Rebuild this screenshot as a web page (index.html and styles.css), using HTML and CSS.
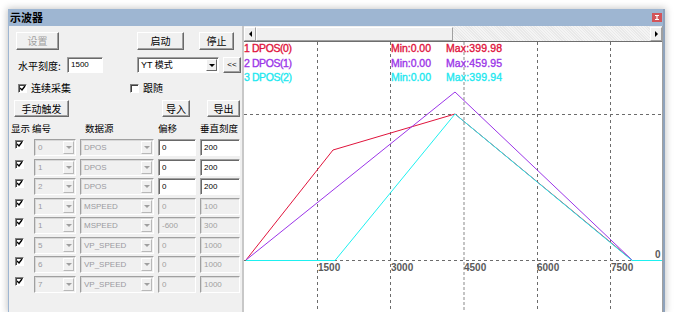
FILE: index.html
```html
<!DOCTYPE html>
<html lang="zh">
  <head>
    <meta charset="UTF-8" />
    <title>示波器</title>
    <link rel="stylesheet" href="styles.css">
  </head>
  <body>
    <div class="window">
      <div class="titlebar">
        <span class="title">示波器</span>
        <span class="close">
          <svg width="10" height="9" viewBox="0 0 10 9"><path d="M3 2.5h4M5 2.5v4M3 6.5h4" stroke="#fff" stroke-width="1.2" fill="none"/></svg>
        </span>
      </div>

      <div class="main">
        <div class="panel">
          <div class="row row-top">
            <button class="btn btn-set" disabled>设置</button>
            <button class="btn btn-start">启动</button>
            <button class="btn btn-stop">停止</button>
          </div>

          <div class="row row-scale">
            <span class="label">水平刻度:</span>
            <span class="field field-h">1500</span>
            <span class="combo combo-mode">YT 模式<span class="drop"><i></i></span></span>
            <button class="btn btn-back">&lt;&lt;</button>
          </div>

          <div class="row row-check">
            <span class="check-group"><span class="check on"></span>连续采集</span>
            <span class="check-group"><span class="check"></span>跟随</span>
          </div>

          <div class="row row-trigger">
            <button class="btn btn-trig">手动触发</button>
            <button class="btn btn-in">导入</button>
            <button class="btn btn-out">导出</button>
          </div>

          <div class="row table-head">
            <span class="col-show">显示</span>
            <span class="col-id">编号</span>
            <span class="col-src">数据源</span>
            <span class="col-off">偏移</span>
            <span class="col-scale">垂直刻度</span>
          </div>

          <div class="channels">
            <div class="channel">
              <span class="check on"></span>
              <span class="combo off combo-id">0<span class="drop"><i></i></span></span>
              <span class="combo off combo-src">DPOS<span class="drop"><i></i></span></span>
              <span class="field field-off">0</span>
              <span class="field field-scale">200</span>
            </div>
            <div class="channel">
              <span class="check on"></span>
              <span class="combo off combo-id">1<span class="drop"><i></i></span></span>
              <span class="combo off combo-src">DPOS<span class="drop"><i></i></span></span>
              <span class="field field-off">0</span>
              <span class="field field-scale">200</span>
            </div>
            <div class="channel">
              <span class="check on"></span>
              <span class="combo off combo-id">2<span class="drop"><i></i></span></span>
              <span class="combo off combo-src">DPOS<span class="drop"><i></i></span></span>
              <span class="field field-off">0</span>
              <span class="field field-scale">200</span>
            </div>
            <div class="channel">
              <span class="check on"></span>
              <span class="combo off combo-id">1<span class="drop"><i></i></span></span>
              <span class="combo off combo-src">MSPEED<span class="drop"><i></i></span></span>
              <span class="field off field-off">0</span>
              <span class="field off field-scale">100</span>
            </div>
            <div class="channel">
              <span class="check on"></span>
              <span class="combo off combo-id">1<span class="drop"><i></i></span></span>
              <span class="combo off combo-src">MSPEED<span class="drop"><i></i></span></span>
              <span class="field off field-off">-600</span>
              <span class="field off field-scale">300</span>
            </div>
            <div class="channel">
              <span class="check on"></span>
              <span class="combo off combo-id">5<span class="drop"><i></i></span></span>
              <span class="combo off combo-src">VP_SPEED<span class="drop"><i></i></span></span>
              <span class="field off field-off">0</span>
              <span class="field off field-scale">1000</span>
            </div>
            <div class="channel">
              <span class="check on"></span>
              <span class="combo off combo-id">6<span class="drop"><i></i></span></span>
              <span class="combo off combo-src">VP_SPEED<span class="drop"><i></i></span></span>
              <span class="field off field-off">0</span>
              <span class="field off field-scale">1000</span>
            </div>
            <div class="channel">
              <span class="check on"></span>
              <span class="combo off combo-id">7<span class="drop"><i></i></span></span>
              <span class="combo off combo-src">VP_SPEED<span class="drop"><i></i></span></span>
              <span class="field off field-off">0</span>
              <span class="field off field-scale">1000</span>
            </div>
          </div>
        </div>

        <div class="split"></div>

        <div class="chart">
          <div class="scrollbar">
            <span class="arrow arrow-left"></span>
            <span class="thumb"></span>
            <span class="track"></span>
            <span class="arrow arrow-right"></span>
          </div>
          <svg class="plot" width="418" height="270" viewBox="0 0 418 270">
            <!-- grid -->
            <g stroke="#6c6c6c" stroke-width="1" stroke-dasharray="3 3" fill="none">
              <path d="M73.5 0V270M146.5 0V270M293.5 0V270M366.5 0V270"/>
              <path d="M0 72.5H418M0 218.5H418"/>
            </g>
            <path d="M220 0V270" stroke="#c4c4c4" stroke-width="2" stroke-dasharray="3 2"/>

            <!-- traces -->
            <polyline points="2,218 89,108 211,72 388,218" fill="none" stroke="#e0143c" stroke-width="1"/>
            <polyline points="2,218 211,50 388,218" fill="none" stroke="#9b35e8" stroke-width="1"/>
            <polyline points="2,218.5 91,218.5 211,72 388,218.5 418,218.5" fill="none" stroke="#1ef0f0" stroke-width="1"/>

            <!-- legend -->
            <g class="legend">
              <g fill="#e0143c" stroke="#e0143c">
                <text x="0" y="10" textLength="48">1 DPOS(0)</text>
                <text x="147" y="10" textLength="40">Min:0.00</text>
                <text x="202" y="10" textLength="56">Max:399.98</text>
              </g>
              <g fill="#9b35e8" stroke="#9b35e8">
                <text x="0" y="25" textLength="48">2 DPOS(1)</text>
                <text x="147" y="25" textLength="40">Min:0.00</text>
                <text x="202" y="25" textLength="56">Max:459.95</text>
              </g>
              <g fill="#1ee8f0" stroke="#1ee8f0">
                <text x="0" y="39" textLength="48">3 DPOS(2)</text>
                <text x="147" y="39" textLength="40">Min:0.00</text>
                <text x="202" y="39" textLength="56">Max:399.94</text>
              </g>
            </g>

            <!-- axis labels -->
            <g class="ticks">
              <text x="74" y="229">1500</text>
              <text x="147" y="229">3000</text>
              <text x="220" y="229">4500</text>
              <text x="293" y="229">6000</text>
              <text x="367" y="229">7500</text>
              <text x="411" y="216">0</text>
            </g>
          </svg>
        </div>
      </div>
    </div>
  </body>
</html>
```

FILE: styles.css
```css
body {
  margin: 0;
  background: #fff;
  font-family: "Noto Sans CJK SC", "Liberation Sans", sans-serif;
  font-size: 10px;
  color: #000;
}
.window {
  margin: 9px 0 0 8px;
  width: 654px;
  border-left: 1px solid #9eb6d2;
  border-right: 2px solid #8fa3bc;
  box-shadow: 0 0 7px 1px rgba(0, 0, 0, 0.22);
}
.titlebar {
  height: 17px;
  background: #9eb6d2;
  display: flex;
  align-items: center;
  justify-content: space-between;
}
.title {
  margin-left: 1px;
  font-size: 11px;
  font-weight: bold;
  line-height: 17px;
}
.close {
  width: 10px;
  height: 9px;
  margin-right: 1px;
  background: #d2555a;
  display: flex;
}
.main {
  display: flex;
  height: 286px;
}

/* left control panel */
.panel {
  width: 233px;
  background: #f0f0f0;
}
.row {
  display: flex;
  align-items: center;
}
.btn {
  box-sizing: border-box;
  height: 18px;
  padding: 0;
  margin: 0;
  font-family: "Noto Sans CJK SC", sans-serif;
  font-size: 10px;
  line-height: 14px;
  color: #000;
  background: #f0f0f0;
  border: 1px solid;
  border-color: #fff #696969 #696969 #fff;
  box-shadow: inset -1px -1px #a0a0a0;
}
.btn:disabled {
  color: #a0a0a0;
}
.row-top {
  margin-top: 6px;
  height: 18px;
  padding-left: 7px;
}
.btn-set { width: 43px; }
.btn-start { width: 47px; margin-left: 78px; }
.btn-stop { width: 35px; margin-left: 15px; }

.row-scale {
  margin-top: 7px;
  height: 16px;
  padding-left: 9px;
}
.label {
  width: 49px;
}
.field {
  box-sizing: border-box;
  height: 16px;
  padding-left: 3px;
  background: #fff;
  border: 1px solid;
  border-color: #a0a0a0 #fff #fff #a0a0a0;
  box-shadow: inset 1px 1px #696969;
  font-family: "Liberation Sans", sans-serif;
  font-size: 8px;
  line-height: 14px;
}
.field.off {
  background: #f0f0f0;
  color: #a0a0a0;
  box-shadow: inset 1px 1px #d8d8d8;
}
.field-h { width: 36px; }
.combo {
  box-sizing: border-box;
  position: relative;
  height: 16px;
  padding-left: 3px;
  background: #fff;
  border: 1px solid;
  border-color: #a0a0a0 #fff #fff #a0a0a0;
  box-shadow: inset 1px 1px #696969;
  font-family: "Liberation Sans", "Noto Sans CJK SC", sans-serif;
  font-size: 8px;
  line-height: 14px;
}
.combo-mode {
  width: 82px;
  margin-left: 34px;
  font-size: 9px;
}
.drop {
  position: absolute;
  right: 1px;
  top: 1px;
  width: 11px;
  height: 12px;
  box-sizing: border-box;
  background: #f0f0f0;
  border: 1px solid;
  border-color: #fff #696969 #696969 #fff;
  display: flex;
  align-items: center;
  justify-content: center;
}
.drop i {
  width: 0;
  height: 0;
  border-left: 3px solid transparent;
  border-right: 3px solid transparent;
  border-top: 3px solid #000;
}
.combo.off {
  background: #f0f0f0;
  color: #9a9aa0;
  box-shadow: inset 1px 1px #d8d8d8;
}
.combo.off .drop {
  border-color: #fff #b8b8b8 #b8b8b8 #fff;
}
.combo.off .drop i {
  border-top-color: #a0a0a0;
}
.btn-back {
  width: 18px;
  height: 16px;
  margin-left: 4px;
  font-family: "Liberation Sans", sans-serif;
  font-size: 8px;
}

.row-check {
  margin-top: 10px;
  height: 10px;
  padding-left: 9px;
}
.check-group {
  display: flex;
  align-items: center;
  width: 119px;
  line-height: 10px;
}
.check {
  box-sizing: border-box;
  width: 9px;
  height: 9px;
  margin-right: 4px;
  background: #fff;
  border: 1px solid;
  border-color: #808080 #fff #fff #808080;
  box-shadow: inset 1px 1px #404040;
}
.check.on {
  background: #fff url("data:image/svg+xml,%3Csvg xmlns='http://www.w3.org/2000/svg' width='7' height='7'%3E%3Cpath d='M1 3l2 2 3-4' stroke='%23000' stroke-width='1.4' fill='none'/%3E%3C/svg%3E") no-repeat 0 0;
}

.row-trigger {
  margin-top: 7px;
  height: 17px;
  padding-left: 5px;
}
.row-trigger .btn { height: 17px; }
.btn-trig { width: 55px; }
.btn-in { width: 28px; margin-left: 93px; }
.btn-out { width: 33px; margin-left: 17px; }

.table-head {
  margin-top: 5px;
  height: 13px;
  padding-left: 2px;
  font-size: 9.5px;
  line-height: 13px;
}
.col-show { width: 21px; }
.col-id { width: 53px; }
.col-src { width: 73px; }
.col-off { width: 42px; }

.channels {
  margin-top: 4px;
}
.channel {
  display: flex;
  align-items: flex-start;
  height: 19.5px;
  padding-left: 6px;
}
.channel .check {
  margin: 1px 0 0;
}
.channel .combo,
.channel .field {
  height: 17px;
  line-height: 15px;
}
.channel .drop { height: 13px; }
.combo-id { width: 42px; margin-left: 10px; }
.combo-src { width: 74px; margin-left: 4px; }
.field-off { width: 38px; margin-left: 4px; }
.field-scale { width: 40px; margin-left: 4px; }

.split {
  width: 2px;
  background: #c8c8c8;
}

/* chart */
.chart {
  width: 418px;
  border-right: 1px solid #a0a0a0;
  display: flex;
  flex-direction: column;
}
.scrollbar {
  display: flex;
  height: 15px;
  background: #f0f0f0;
}
.arrow {
  box-sizing: border-box;
  width: 12px;
  height: 14px;
  margin-top: 1px;
  background: #f0f0f0;
  border: 1px solid;
  border-color: #fff #a0a0a0 #a0a0a0 #fff;
  display: flex;
  align-items: center;
  justify-content: center;
}
.arrow::before {
  content: "";
  border-top: 3px solid transparent;
  border-bottom: 3px solid transparent;
}
.arrow-left::before { border-right: 3px solid #000; }
.arrow-right::before { border-left: 3px solid #000; }
.thumb {
  box-sizing: border-box;
  width: 197px;
  margin-top: 1px;
  border: 1px solid;
  border-color: #fff #a0a0a0 #a0a0a0 #fff;
  background: #f0f0f0;
}
.track {
  flex: 1;
  background: repeating-linear-gradient(45deg, #f4f4f4 0 1px, #e9e9e9 1px 2px);
}
.plot {
  display: block;
  background: #fff;
  border-top: 1px solid #6e6e6e;
}
.legend text {
  font-family: "Liberation Sans", sans-serif;
  font-size: 10.5px;
  stroke-width: 0.35px;
}
.ticks text {
  font-family: "Liberation Sans", sans-serif;
  font-size: 10px;
  font-weight: bold;
  fill: #5a5a5a;
}
```
